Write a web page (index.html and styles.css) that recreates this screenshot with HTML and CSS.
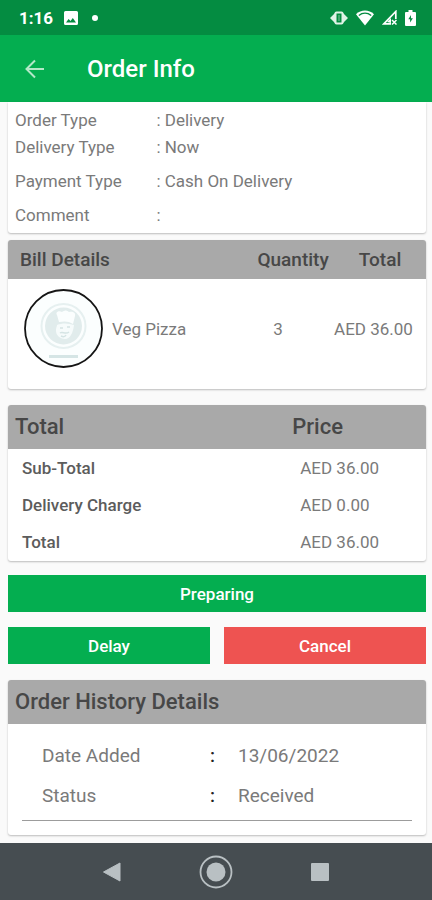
FILE: index.html
```html
<!DOCTYPE html>
<html lang="en">
<head>
  <meta charset="UTF-8">
  <meta name="viewport" content="width=device-width, initial-scale=1">
  <title>Order Info</title>
  <link rel="stylesheet" href="styles.css">
</head>
<body>

<div class="status-bar">
  <span class="time">1:16</span>
  <svg width="14" height="14" viewBox="0 0 14 14">
    <path fill="#fff" fill-rule="evenodd" d="M1.500 0h11A1.500 1.500 0 0 1 14 1.500v11a1.500 1.500 0 0 1-1.500 1.500h-11A1.500 1.500 0 0 1 0 12.500v-11A1.500 1.500 0 0 1 1.500 0zM2 11.500h10L8.800 7 6.500 10 4.600 8z"/>
  </svg>
  <span class="dot"></span>
  <div class="status-icons">
    <svg width="18" height="14" viewBox="0 0 18 14">
      <path fill="#dff3e6" d="M0 7l5-5v10zM18 7l-5-5v10z"/>
      <rect x="5.500" y="1.500" width="7" height="11" rx="1" fill="#048c41" stroke="#dff3e6" stroke-width="2"/>
      <path stroke="#7fc79d" stroke-width="1" d="M9 4v6"/>
    </svg>
    <svg width="18" height="16" viewBox="0 0 18 16">
      <path fill="#fff" d="M0 4.200C5-.8 13-.8 18 4.200L9 15.500z"/>
      <path fill="none" stroke="#048c41" stroke-width="1.300" d="M2.800 5.500c3.700-3 8.700-3 12.400 0"/>
    </svg>
    <svg width="15" height="15" viewBox="0 0 15 15">
      <path fill="none" stroke="#fff" stroke-width="1.700" d="M13.800 9V1.500L1.800 13.800H9"/>
      <path fill="#fff" d="M5 12l4-4v5z"/>
      <path stroke="#fff" stroke-width="1.500" d="M10 10l4.500 4.500M14.500 10L10 14.500"/>
    </svg>
    <svg width="11" height="16" viewBox="0 0 11 16">
      <path fill="#fff" d="M3.500 0h4v2H10a1 1 0 0 1 1 1v12a1 1 0 0 1-1 1H1a1 1 0 0 1-1-1V3a1 1 0 0 1 1-1h2.500z"/>
      <path fill="#048c41" d="M6 5L3.300 9.200h1.800v3.300l2.800-4.300H6z"/>
    </svg>
  </div>
</div>

<header class="app-bar">
  <button class="back" aria-label="Back">
    <svg width="20" height="20" viewBox="0 0 20 20" fill="none" stroke="#b4e8c8" stroke-width="2">
      <path d="M19 10H1.500M10 1.500L1.500 10l8.500 8.500"/>
    </svg>
  </button>
  <h1>Order Info</h1>
</header>

<main>
  <section class="card details">
    <dl>
      <dt>Order Type</dt><dd>: Delivery</dd>
      <dt>Delivery Type</dt><dd>: Now</dd>
    </dl>
    <dl>
      <dt>Payment Type</dt><dd>: Cash On Delivery</dd>
    </dl>
    <dl>
      <dt>Comment</dt><dd>:</dd>
    </dl>
  </section>

  <table class="card bill">
    <thead>
      <tr><th class="item">Bill Details</th><th class="qty">Quantity</th><th class="total">Total</th></tr>
    </thead>
    <tbody>
      <tr>
        <td>
          <div class="product">
            <svg width="80" height="80" viewBox="0 0 80 80">
              <circle cx="39.500" cy="39.500" r="38.500" fill="#fbfefe" stroke="#151515" stroke-width="1.800"/>
              <circle cx="39.500" cy="37" r="22" fill="none" stroke="#e6f0f0" stroke-width="2"/>
              <circle cx="39.500" cy="37" r="18.500" fill="#e1ecec"/>
              <path fill="#fbfefe" d="M35 33l-2-7c-2-3 2-5 5-3 3-2 5-2 7 0 4-1 7 1 6 4l-2 8c-4-3-9-3-14-2z"/>
              <path fill="#f6fbfb" d="M33 36c5-2 11-2 17 0-1 8-4 14-9 14s-9-4-9-8 1-4 1-6z"/>
              <path fill="none" stroke="#d5e4e4" stroke-width="1.500" d="M36 39h3M43 38h3M36 44c3-2 5 2 9-1M37 47c2 1 4 1 5-1"/>
              <path stroke="#d5e5e5" stroke-width="3" d="M25 67.500h29"/>
            </svg>
            Veg Pizza
          </div>
        </td>
        <td class="qty">3</td>
        <td class="total">AED 36.00</td>
      </tr>
    </tbody>
  </table>

  <table class="card totals">
    <thead>
      <tr><th class="label">Total</th><th>Price</th></tr>
    </thead>
    <tbody>
      <tr><th>Sub-Total</th><td>AED 36.00</td></tr>
      <tr><th>Delivery Charge</th><td>AED 0.00</td></tr>
      <tr><th>Total</th><td>AED 36.00</td></tr>
    </tbody>
  </table>

  <div class="actions">
    <button class="btn wide">Preparing</button>
    <button class="btn">Delay</button>
    <button class="btn cancel">Cancel</button>
  </div>

  <section class="card history">
    <h2>Order History Details</h2>
    <dl>
      <dt>Date Added</dt><dd>13/06/2022</dd>
      <dt>Status</dt><dd>Received</dd>
    </dl>
  </section>
</main>

<nav class="nav-bar">
  <button aria-label="Back">
    <svg width="20" height="20" viewBox="0 0 20 20"><path fill="#b9c0c3" stroke="#b9c0c3" stroke-linejoin="round" d="M1.500 10L18 1v18z"/></svg>
  </button>
  <button aria-label="Home">
    <svg width="34" height="34" viewBox="0 0 34 34">
      <circle cx="17" cy="17" r="15.500" fill="none" stroke="#b9c0c3" stroke-width="1.800"/>
      <circle cx="17" cy="17" r="9.500" fill="#b9c0c3"/>
    </svg>
  </button>
  <button aria-label="Recent apps">
    <svg width="20" height="20" viewBox="0 0 20 20"><rect x="1" y="1" width="18" height="18" rx="1" fill="#b9c0c3"/></svg>
  </button>
</nav>

</body>
</html>
```
FILE: styles.css
```css
* {
  box-sizing: border-box;
}

body {
  margin: 0;
  min-height: 100vh;
  display: flex;
  flex-direction: column;
  background-color: #fafafa;
  color: #7a7a7a;
  font-family: Roboto, sans-serif;
  font-size: 17px;
  line-height: 20px;
}

button {
  border: none;
  padding: 0;
  background: none;
  font-family: inherit;
  cursor: pointer;
}

svg {
  display: block;
  flex-shrink: 0;
}

h1, h2, dl, dd {
  margin: 0;
}

/* Top bars */
.status-bar {
  display: flex;
  align-items: center;
  height: 35px;
  padding: 0 16px 0 19px;
  background-color: #048c41;
}

.time {
  margin-right: 11px;
  color: #fff;
  font-weight: 700;
}

.dot {
  width: 6px;
  height: 6px;
  margin-left: 14px;
  border-radius: 50%;
  background-color: #fff;
}

.status-icons {
  display: flex;
  align-items: center;
  gap: 8px;
  margin-left: auto;
}

.app-bar {
  display: flex;
  align-items: center;
  gap: 42px;
  height: 67px;
  padding: 0 25px;
  background-color: #04ae50;
}

.app-bar h1 {
  color: #fff;
  font-size: 24px;
  font-weight: 500;
  line-height: 32px;
}

/* Content */
main {
  flex: 1;
  padding: 0 6px 6px 8px;
}

.card {
  width: 100%;
  background-color: #fff;
  border-radius: 3px;
  box-shadow: 0 1px 2px rgba(0, 0, 0, 0.25);
}

.details {
  display: flex;
  flex-direction: column;
  gap: 14px;
  padding: 8px 7px;
  border-radius: 0 0 3px 3px;
}

.details dl {
  display: grid;
  grid-template-columns: 35% 1fr;
  row-gap: 7px;
}

table {
  border-spacing: 0;
  table-layout: fixed;
}

th {
  padding: 0;
  text-align: left;
}

td {
  padding: 0;
}

thead th, .history h2 {
  background-color: #a9a9a9;
  color: #474747;
  font-weight: 500;
}

thead th:first-child {
  border-top-left-radius: 3px;
}

thead th:last-child {
  border-top-right-radius: 3px;
}

.bill {
  margin-top: 7px;
}

.bill thead th {
  height: 39px;
  font-size: 19px;
}

.bill td {
  padding: 10px 0 20px;
}

.bill .item {
  padding-left: 12px;
}

.bill .qty {
  width: 22%;
  text-align: center;
}

.bill td.qty {
  padding-right: 20px;
}

.bill th.qty {
  padding-left: 10px;
}

.bill th.total {
  width: 22%;
  text-align: center;
}

.product {
  display: flex;
  align-items: center;
  gap: 8px;
  padding-left: 16px;
}

.totals {
  margin-top: 16px;
  padding-bottom: 1px;
}

.totals thead th {
  height: 44px;
  font-size: 22px;
}

.totals .label {
  width: 68%;
  padding-left: 7px;
}

.totals tbody th {
  height: 37px;
  padding-left: 14px;
  color: #5c5c5c;
  font-weight: 500;
}

.totals td {
  padding-left: 8px;
}

.actions {
  display: grid;
  grid-template-columns: 1fr 1fr;
  gap: 15px 14px;
  margin: 14px 0 16px;
}

.btn {
  height: 37px;
  background-color: #04ae50;
  color: #fff;
  font-size: 17px;
  font-weight: 500;
}

.btn.wide {
  grid-column: span 2;
}

.btn.cancel {
  background-color: #ee5351;
}

.history {
  padding-bottom: 14px;
}

.history h2 {
  padding: 0 7px;
  border-radius: 3px 3px 0 0;
  font-size: 22px;
  line-height: 44px;
}

.history dl {
  display: grid;
  grid-template-columns: 48% 1fr;
  row-gap: 20px;
  margin: 0 14px;
  padding: 22px 20px 14px;
  border-bottom: 1px solid #9c9c9c;
  font-size: 19px;
}

.history dd::before {
  content: ":";
  display: inline-block;
  width: 28px;
  color: #222;
  font-weight: 500;
}

/* Bottom navigation */
.nav-bar {
  display: flex;
  justify-content: center;
  align-items: center;
  gap: 77px;
  height: 57px;
  background-color: #464d51;
}
```
